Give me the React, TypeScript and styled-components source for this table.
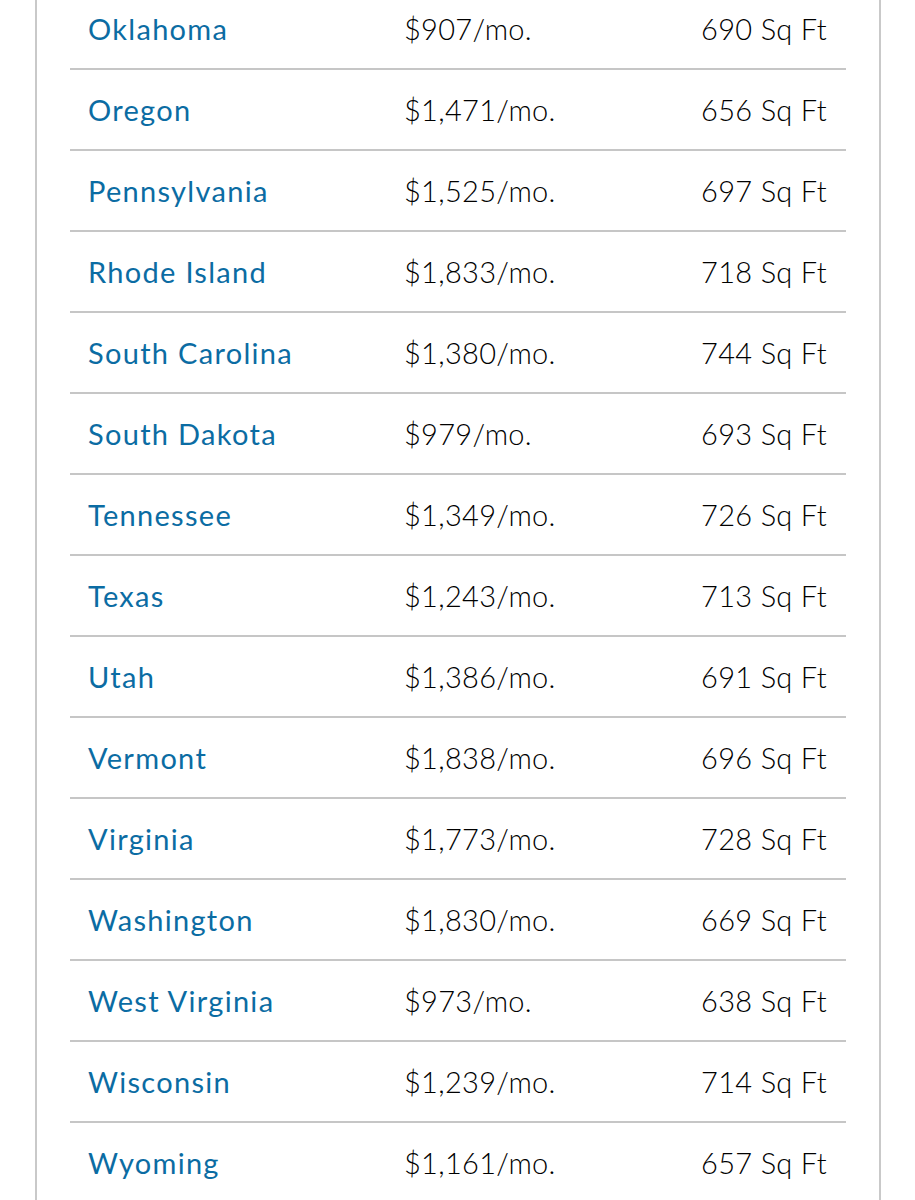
import React from "react";
import styled, { createGlobalStyle } from "styled-components";

const Global = createGlobalStyle`
  html, body { margin: 0; padding: 0; background: #ffffff; }
  body { font-family: "Lato", "Noto Sans", sans-serif; overflow: hidden; }
`;

const Page = styled.div`
  width: 915px;
  height: 1200px;
  overflow: hidden;
  background: #ffffff;
`;

const Card = styled.div`
  margin: -12px 0 0 35px;
  width: 846px;
  border-left: 2px solid #c9c9c9;
  border-right: 2px solid #c9c9c9;
  padding: 0 33px;
  box-sizing: border-box;
  min-height: 1300px;
`;

const Row = styled.div`
  display: grid;
  grid-template-columns: 316px 1fr auto;
  align-items: center;
  height: 79px;
  padding: 0 19px 0 18px;
  border-bottom: 2px solid #c6c6c6;
  &:first-child {
    height: 80px;
  }
`;

const Name = styled.span`
  color: #0b6ca3;
  font-size: 29px;
  font-weight: 400;
  letter-spacing: 1.3px;
`;

const Value = styled.span<{ $right?: boolean }>`
  color: #000000;
  font-size: 29px;
  font-weight: 300;
  letter-spacing: 0.3px;
  text-align: ${(p) => (p.$right ? "right" : "left")};
`;

const data: [string, string, string][] = [
  ["Oklahoma", "$907/mo.", "690 Sq Ft"],
  ["Oregon", "$1,471/mo.", "656 Sq Ft"],
  ["Pennsylvania", "$1,525/mo.", "697 Sq Ft"],
  ["Rhode Island", "$1,833/mo.", "718 Sq Ft"],
  ["South Carolina", "$1,380/mo.", "744 Sq Ft"],
  ["South Dakota", "$979/mo.", "693 Sq Ft"],
  ["Tennessee", "$1,349/mo.", "726 Sq Ft"],
  ["Texas", "$1,243/mo.", "713 Sq Ft"],
  ["Utah", "$1,386/mo.", "691 Sq Ft"],
  ["Vermont", "$1,838/mo.", "696 Sq Ft"],
  ["Virginia", "$1,773/mo.", "728 Sq Ft"],
  ["Washington", "$1,830/mo.", "669 Sq Ft"],
  ["West Virginia", "$973/mo.", "638 Sq Ft"],
  ["Wisconsin", "$1,239/mo.", "714 Sq Ft"],
  ["Wyoming", "$1,161/mo.", "657 Sq Ft"],
];

export default function App() {
  return (
    <Page>
      <Global />
      <Card>
        {data.map(([s, p, a]) => (
          <Row key={s}>
            <Name>{s}</Name>
            <Value>{p}</Value>
            <Value $right>{a}</Value>
          </Row>
        ))}
      </Card>
    </Page>
  );
}
